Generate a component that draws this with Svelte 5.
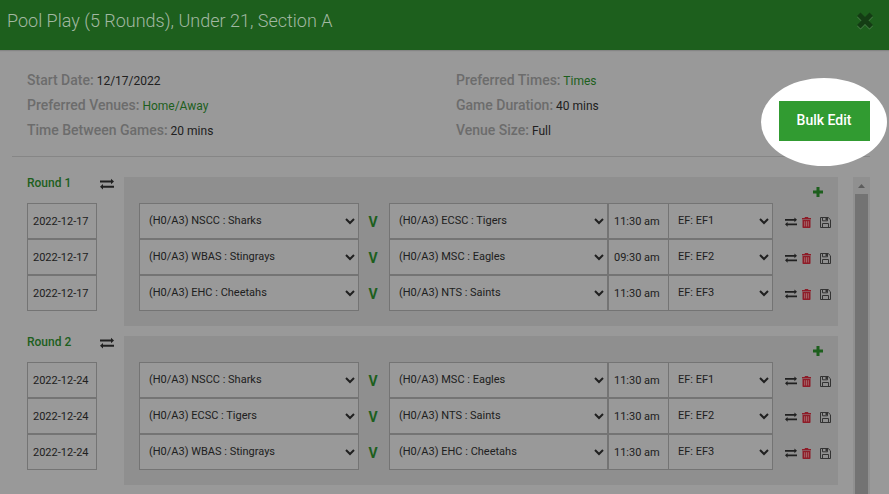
<script>
  const teams = [
    '(H0/A3) NSCC : Sharks',
    '(H0/A3) ECSC : Tigers',
    '(H0/A3) WBAS : Stingrays',
    '(H0/A3) MSC : Eagles',
    '(H0/A3) EHC : Cheetahs',
    '(H0/A3) NTS : Saints'
  ];
  const venues = ['EF: EF1', 'EF: EF2', 'EF: EF3'];

  const details = [
    { label: 'Start Date:', value: '12/17/2022' },
    { label: 'Preferred Times:', value: 'Times', link: true },
    { label: 'Preferred Venues:', value: 'Home/Away', link: true },
    { label: 'Game Duration:', value: '40 mins' },
    { label: 'Time Between Games:', value: '20 mins' },
    { label: 'Venue Size:', value: 'Full' }
  ];

  let rounds = $state([
    {
      name: 'Round 1',
      games: [
        { date: '2022-12-17', home: teams[0], away: teams[1], time: '11:30 am', venue: venues[0] },
        { date: '2022-12-17', home: teams[2], away: teams[3], time: '09:30 am', venue: venues[1] },
        { date: '2022-12-17', home: teams[4], away: teams[5], time: '11:30 am', venue: venues[2] }
      ]
    },
    {
      name: 'Round 2',
      games: [
        { date: '2022-12-24', home: teams[0], away: teams[3], time: '11:30 am', venue: venues[0] },
        { date: '2022-12-24', home: teams[1], away: teams[5], time: '11:30 am', venue: venues[1] },
        { date: '2022-12-24', home: teams[2], away: teams[4], time: '11:30 am', venue: venues[2] }
      ]
    }
  ]);

  function swap(game) {
    [game.home, game.away] = [game.away, game.home];
  }

  function swapAll(round) {
    round.games.forEach(swap);
  }

  function addGame(round) {
    round.games.push({ ...round.games[round.games.length - 1] });
  }

  function removeGame(round, i) {
    round.games.splice(i, 1);
  }
</script>

{#snippet swapIcon(size)}
  <svg width={size} height={size} viewBox="0 0 14 14" aria-hidden="true">
    <path d="M0 3.500h11V1.800L14 4.500 11 7.200V5.500H0zM14 8.700H3V7L0 9.700l3 2.700v-1.700H14z" fill="currentColor" />
  </svg>
{/snippet}

<div class="modal">
  <header>
    <h1>Pool Play (5 Rounds), Under 21, Section A</h1>
    <button class="close" aria-label="Close">
      <svg width="18" height="20" viewBox="0 0 18 20" aria-hidden="true">
        <path d="M4.500 2.500 9 7l4.500-4.500L17 6l-4.500 4.500L17 15l-3.500 3.500L9 14l-4.500 4.500L1 15l4.500-4.500L1 6z" fill="#4c814c" />
        <path d="M4.500 1.500 9 6l4.500-4.500L17 5l-4.500 4.500L17 14l-3.500 3.500L9 13l-4.500 4.500L1 14l4.500-4.500L1 5z" fill="#143d14" />
      </svg>
    </button>
  </header>

  <section class="summary">
    <div class="details">
      {#each details as d}
        <div class="detail">
          <span class="label">{d.label}</span>
          {#if d.link}<a href="#edit">{d.value}</a>{:else}<span>{d.value}</span>{/if}
        </div>
      {/each}
    </div>
    <div class="spotlight">
      <button class="bulk">Bulk Edit</button>
    </div>
  </section>

  <div class="schedule">
    <div class="rounds">
      {#each rounds as round}
        <section class="round">
          <div class="dates">
            <div class="round-head">
              <h2>{round.name}</h2>
              <button class="icon" aria-label="Swap all games" onclick={() => swapAll(round)}>{@render swapIcon(14)}</button>
            </div>
            {#each round.games as game}
              <input class="date" aria-label="Date" bind:value={game.date} />
            {/each}
          </div>
          <div class="games">
            <div class="games-head">
              <button class="icon add" aria-label="Add game" onclick={() => addGame(round)}>
                <svg width="10" height="10" viewBox="0 0 10 10" aria-hidden="true">
                  <path d="M3.500 0h3v3.500H10v3H6.500V10h-3V6.500H0v-3h3.500z" fill="currentColor" />
                </svg>
              </button>
            </div>
            {#each round.games as game, i}
              <div class="game">
                <select aria-label="Home team" bind:value={game.home}>
                  {#each teams as team}<option>{team}</option>{/each}
                </select>
                <span class="versus">V</span>
                <select aria-label="Away team" bind:value={game.away}>
                  {#each teams as team}<option>{team}</option>{/each}
                </select>
                <input aria-label="Time" bind:value={game.time} />
                <select class="venue" aria-label="Venue" bind:value={game.venue}>
                  {#each venues as venue}<option>{venue}</option>{/each}
                </select>
                <div class="actions">
                  <button class="icon" aria-label="Swap teams" onclick={() => swap(game)}>{@render swapIcon(12)}</button>
                  <button class="icon delete" aria-label="Delete game" onclick={() => removeGame(round, i)}>
                    <svg width="9" height="11" viewBox="0 0 9 11" aria-hidden="true">
                      <path d="M3 1V.5h3V1" fill="none" stroke="currentColor" />
                      <path d="M0 1h9v1.600H0zM.5 3h8v7.200a.8.8 0 0 1-.8.8H1.300a.8.8 0 0 1-.8-.8z" fill="currentColor" />
                      <path d="M2.700 4.200v5.300M4.500 4.200v5.300M6.300 4.200v5.300" stroke="#a77" stroke-width=".8" />
                    </svg>
                  </button>
                  <button class="icon save" aria-label="Save game">
                    <svg width="11" height="11" viewBox="0 0 11 11" fill="none" stroke="currentColor" aria-hidden="true">
                      <path d="M.5.5h7.700l2.300 2.300v7.700H.5z" />
                      <path d="M2.500.5v3.300h5V.5M2.500 10.500V6.500h6v4" />
                      <path d="M5.500 1h1.500v2H5.500z" fill="currentColor" stroke="none" />
                    </svg>
                  </button>
                </div>
              </div>
            {/each}
          </div>
        </section>
      {/each}
    </div>
    <div class="scrollbar" aria-hidden="true">
      <svg width="7" height="4" viewBox="0 0 7 4"><path d="M0 4 3.500 0 7 4z" fill="#5c5c5c" /></svg>
      <div class="thumb"></div>
    </div>
  </div>
</div>

<style>
  :global(body) { margin: 0; background: #999; }
  .modal { display: flex; flex-direction: column; min-height: 100vh; background: #999; color: #202020; font-family: Roboto, "Liberation Sans", sans-serif; font-size: 12px; }

  header { display: flex; justify-content: space-between; align-items: center; height: 50px; padding: 0 15px 9px 7px; box-sizing: border-box; background: #1d5f1d; box-shadow: 0 1px 1px #858585; }
  h1 { margin: 0; font-size: 18px; line-height: 22px; font-weight: 300; color: #a2b8a2; }
  button { padding: 0; border: 0; background: none; font-family: inherit; color: inherit; cursor: pointer; }
  button svg { display: block; }

  .summary { display: flex; align-items: center; position: relative; margin: 0 19px 0 12px; padding: 18px 0 13px; border-bottom: 1px solid #868686; }
  .details { flex: 1; display: grid; grid-template-columns: 1fr 1fr; grid-auto-rows: 25px; }
  .detail { padding: 0 15px; font-size: 12px; line-height: 25px; }
  .label { font-size: 14px; font-weight: 500; color: #6c6c6c; }
  a { color: #1d5f1d; text-decoration: none; }

  /* white oval that draws the eye to the bulk edit button */
  .spotlight { position: absolute; right: -17px; top: 28px; display: flex; align-items: center; justify-content: center; width: 126px; height: 88px; padding-bottom: 2px; box-sizing: border-box; border-radius: 50%; background: #fff; }
  .bulk { width: 91px; height: 40px; padding-bottom: 2px; background: #319b31; color: #fff; font-size: 14px; font-weight: 500; }

  .schedule { flex: 1; display: flex; gap: 15px; margin: 20px 19px 0 27px; }
  .rounds { flex: 1; min-width: 0; }
  .round { display: flex; gap: 10px; margin-bottom: 10px; }
  .dates { width: 87px; }
  .round-head { display: flex; justify-content: space-between; height: 26px; }
  h2 { margin: 0; font-size: 12px; line-height: 12px; font-weight: 500; color: #1d5f1d; }
  .round-head .icon { height: 14px; }
  .date { width: 70px; }

  .games { flex: 1; min-width: 0; padding: 0 0 15px 15px; background: #8f8f8f; }
  .games-head { display: flex; justify-content: flex-end; align-items: center; height: 26px; padding: 4px 15px 0 0; box-sizing: border-box; }
  .add { color: #1d5f1d; }
  .game { display: grid; grid-template-columns: minmax(0, 220fr) 30px minmax(0, 219fr) 61px minmax(0, 104fr) 65px; align-items: center; }
  .versus { padding: 2px 2px 0 0; text-align: center; font-size: 14px; font-weight: 700; color: #1d5f1d; }

  input, select { display: block; height: 36px; box-sizing: border-box; margin: 0; border: 1px solid #747474; border-radius: 0; background-color: #999; color: #202020; font-family: inherit; font-size: 11px; }
  input { padding: 0 5px; min-width: 0; }
  select { width: 100%; padding: 0 5px 2px; }
  .venue { border-left: 0; }

  .actions { display: flex; align-items: center; padding: 2px 0 0 12px; }
  .delete { margin-left: 5px; color: #8e1c28; }
  .save { margin-left: 9px; color: #333; }

  .scrollbar { display: flex; flex-direction: column; align-items: center; width: 17px; background: #909090; }
  .scrollbar svg { margin: 7px 0 6px; }
  .thumb { flex: 1; width: 13px; background: #737373; }
</style>
